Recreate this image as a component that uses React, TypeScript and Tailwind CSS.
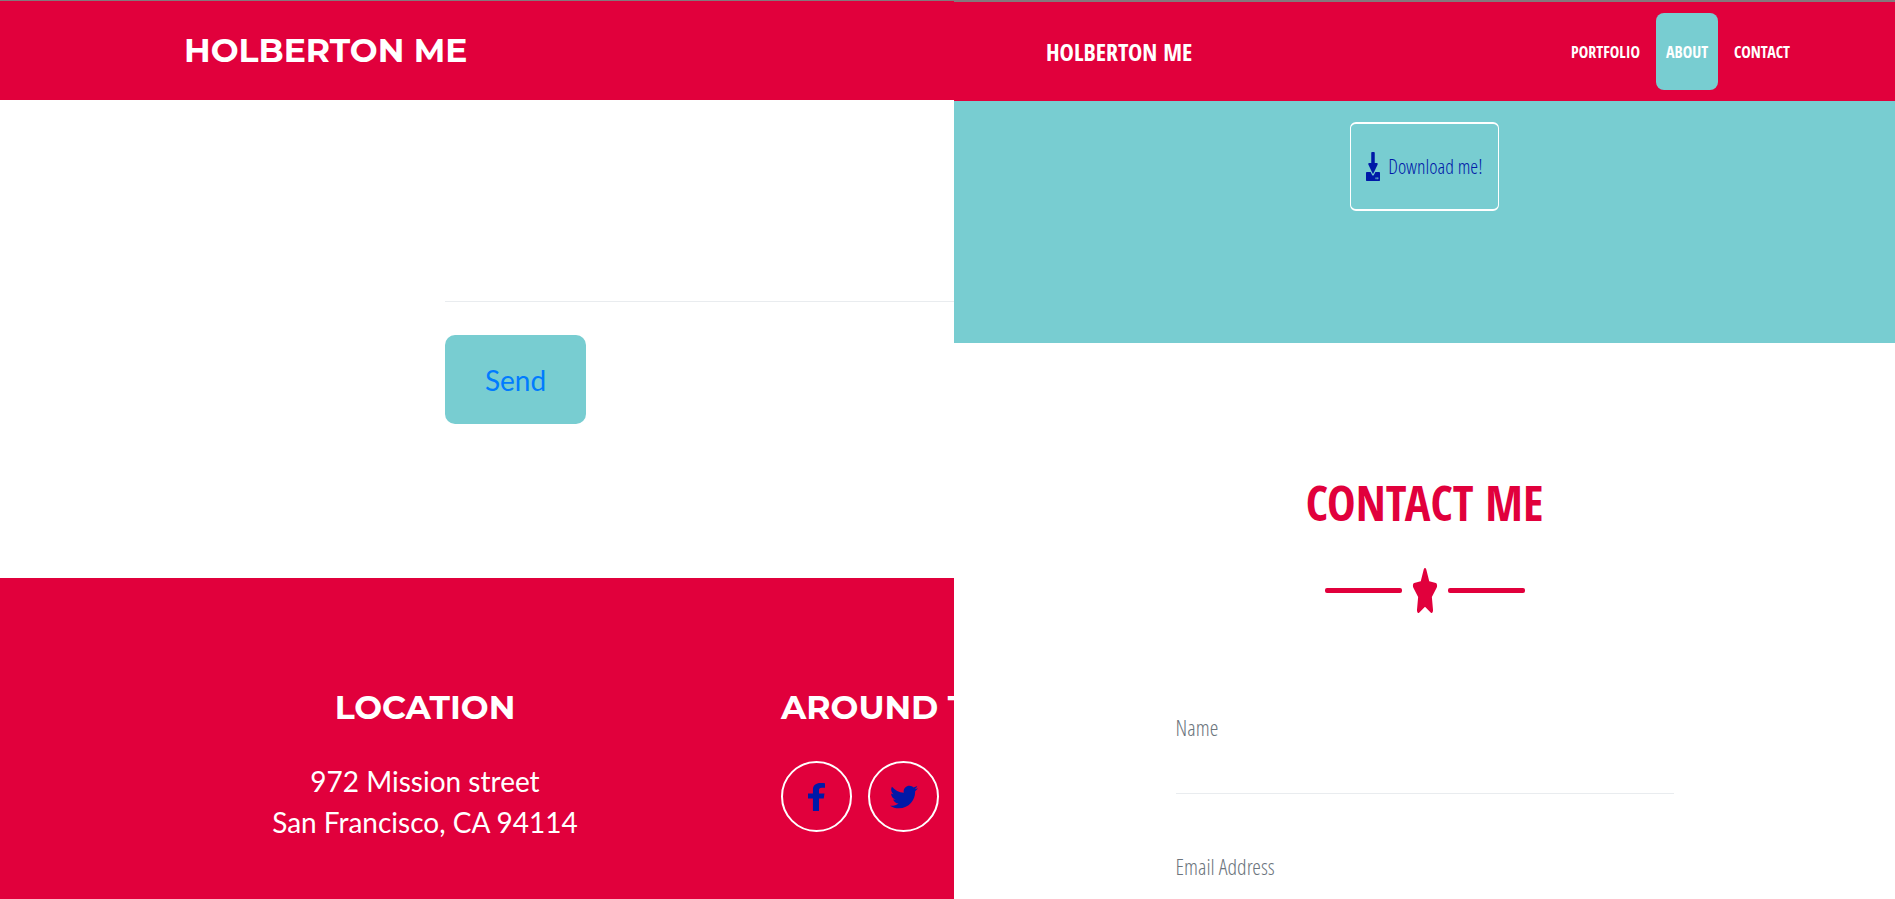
import type { ReactNode } from "react";
import { FaDownload, FaStar, FaTwitter } from "react-icons/fa";

const heading = "font-['Montserrat','Inter',sans-serif] font-bold uppercase";
const bodyText = "font-['Lato',sans-serif] text-[28px]";
const narrowHeading = "font-['Open_Sans_Condensed','Roboto_Condensed',sans-serif] font-bold uppercase";
const narrowText = "font-['Open_Sans_Condensed_Light','Roboto_Condensed',sans-serif] font-light";

function FacebookIcon() {
  return (
    <svg viewBox="0 0 264 512" fill="currentColor" aria-hidden="true" className="h-[28px] w-[17px]" preserveAspectRatio="none">
      <path d="M76.7 512V283H0v-91h76.7v-71.7C76.7 42.4 124.3 0 193.8 0c33.3 0 61.9 2.5 70.2 3.6V85h-48.2c-37.8 0-45.1 18-45.1 44.3V192H256l-11.7 91h-73.6v229" />
    </svg>
  );
}

function SocialLink({ label, children }: { label: string; children: ReactNode }) {
  return (
    <a
      href="#social"
      aria-label={label}
      className="flex size-[71px] shrink-0 items-center justify-center rounded-full border-2 border-white text-[28px] text-[#0019a8]"
    >
      {children}
    </a>
  );
}

function NavLink({ href, active, children }: { href: string; active?: boolean; children: ReactNode }) {
  return (
    <a
      href={href}
      className={
        active
          ? "flex h-[77px] items-center rounded-lg bg-[#78cdd1] px-[10px]"
          : "flex h-[77px] items-center rounded-lg px-[10px]"
      }
    >
      {children}
    </a>
  );
}

function Field({ id, label, type }: { id: string; label: string; type: string }) {
  return (
    <div className="border-b border-[#e9ecef] pt-[56px]">
      <label htmlFor={id} className={`${narrowText} block text-[22px] leading-[32px] text-[#6c757d]`}>
        {label}
      </label>
      <input
        id={id}
        type={type}
        className={`${narrowText} block h-[50px] w-full bg-transparent text-[22px] text-[#6c757d] outline-none`}
      />
    </div>
  );
}

function MessagePanel() {
  return (
    <section className="flex w-[954px] max-w-[50.35%] shrink-0 flex-col overflow-hidden">
      <header className="flex h-[100px] shrink-0 items-center border-t border-[#84787c] bg-[#e1003c] pl-[184px]">
        <a href="#top" className={`${heading} text-[33px] text-white`}>
          Holberton Me
        </a>
      </header>

      <form className="flex h-[478px] shrink-0 flex-col items-start pl-[445px]">
        <textarea
          aria-label="Message"
          className="block h-[202px] w-full shrink-0 resize-none border-b border-[#e9ecef] outline-none"
        />
        <button
          type="button"
          className={`${bodyText} mt-[33px] h-[89px] w-[141px] rounded-[10px] bg-[#78cdd1] text-[#007bff]`}
        >
          Send
        </button>
      </form>

      <footer className="flex flex-1 bg-[#e1003c] pt-[107px] pl-[185px] text-white">
        <div className="w-[480px] shrink-0 text-center">
          <h4 className={`${heading} text-[33px] leading-[44px]`}>Location</h4>
          <p className={`${bodyText} mt-[32px] leading-[41px]`}>
            972 Mission street
            <br />
            San Francisco, CA 94114
          </p>
        </div>
        <div className="ml-[116px] shrink-0">
          <h4 className={`${heading} text-[33px] leading-[44px] whitespace-nowrap`}>Around the Web</h4>
          <div className="mt-[32px] flex gap-[16px]">
            <SocialLink label="Facebook">
              <FacebookIcon />
            </SocialLink>
            <SocialLink label="Twitter">
              <FaTwitter />
            </SocialLink>
          </div>
        </div>
      </footer>
    </section>
  );
}

function ContactPanel() {
  return (
    <section className="flex min-w-0 flex-1 flex-col overflow-hidden bg-white">
      <header className="flex h-[101px] shrink-0 items-center justify-between border-t-2 border-[#84787c] bg-[#e1003c] pr-[95px] pl-[92px] text-white">
        <a href="#top" className={`${narrowHeading} text-[24px]`}>
          Holberton Me
        </a>
        <nav className={`${narrowHeading} flex gap-[6px] text-[16px]`}>
          <NavLink href="#portfolio">Portfolio</NavLink>
          <NavLink href="#about" active>
            About
          </NavLink>
          <NavLink href="#contact">Contact</NavLink>
        </nav>
      </header>

      <div className="flex h-[242px] shrink-0 items-start justify-center bg-[#78cdd1] pt-[21px]">
        <a
          href="#download"
          className={`${narrowText} flex h-[89px] w-[149px] items-center justify-center gap-[8px] rounded-md border-x border-y-2 border-white text-[20px] whitespace-nowrap text-[#0019a8]`}
        >
          <FaDownload preserveAspectRatio="none" className="h-[29px] w-[14px]" />
          Download me!
        </a>
      </div>

      <div className="flex shrink-0 flex-col items-center pt-[120px] text-[#e1003c]">
        <h2 className={`${narrowHeading} text-[48px] leading-[80px]`}>Contact Me</h2>
        <div className="mt-[25px] flex items-center gap-[10px]">
          <span className="h-[5px] w-[77px] rounded-[2px] bg-[#e1003c]" />
          <FaStar preserveAspectRatio="none" className="h-[45px] w-[26px]" />
          <span className="h-[5px] w-[77px] rounded-[2px] bg-[#e1003c]" />
        </div>
      </div>

      <form className="mx-auto mt-[42px] w-full max-w-[498px] shrink-0">
        <Field id="name" label="Name" type="text" />
        <Field id="email" label="Email Address" type="email" />
      </form>
    </section>
  );
}

export default function App() {
  return (
    <main className="flex h-screen overflow-hidden bg-white">
      <MessagePanel />
      <ContactPanel />
    </main>
  );
}
